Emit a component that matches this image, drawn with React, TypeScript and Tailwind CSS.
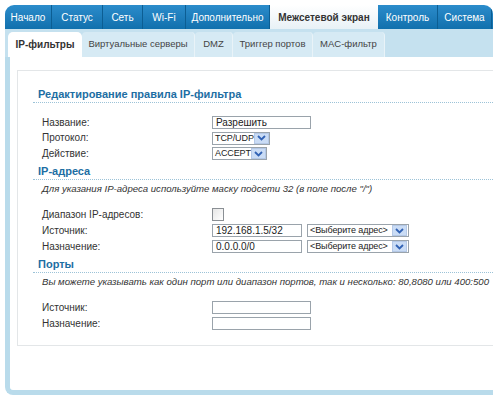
import React from "react";

const font = { fontFamily: '"Liberation Sans", Arial, sans-serif' };

function Chevron() {
  return (
    <span className="flex h-[11px] w-[15px] shrink-0 items-center justify-center border border-[#b4c8e6] bg-[#cadcf5]">
      <svg width="9" height="6" viewBox="0 0 9 6">
        <polyline points="1,1 4.5,4.5 8,1" fill="none" stroke="#3162b4" strokeWidth="1.8" />
      </svg>
    </span>
  );
}

function Select({ text, w }: { text: string; w: string }) {
  return (
    <div className={`flex h-[13px] shrink-0 items-center justify-between border border-[#9aa3ab] bg-white pl-[2px] pr-[1px] ${w}`}>
      <span className="whitespace-nowrap text-[9px] leading-[11px] tracking-[-0.1px] text-[#222]">{text}</span>
      <Chevron />
    </div>
  );
}

function Input({ text, w }: { text?: string; w: string }) {
  return (
    <div className={`flex h-[13px] items-center overflow-hidden border border-[#9aa3ab] bg-white pl-[3px] ${w}`}>
      <span className="whitespace-nowrap text-[10px] leading-[11px] text-[#222]">{text}</span>
    </div>
  );
}

function Row({ label, children }: { label: string; children: React.ReactNode }) {
  return (
    <div className="flex h-[13px] items-center">
      <div className="w-[194px] shrink-0 whitespace-nowrap pl-[24px] text-[10px] leading-[12px] text-[#333]">{label}</div>
      <div className="flex items-center gap-[5px]">{children}</div>
    </div>
  );
}

function Heading({ text }: { text: string }) {
  return (
    <div className="ml-[15px] border-b border-dotted border-[#9cc3d8] pl-[5px] text-[11px] font-bold leading-[15px] text-[#1d6ea3]">
      {text}
    </div>
  );
}

function Note({ text }: { text: string }) {
  return (
    <div className="mt-[3px] whitespace-nowrap pl-[24px] text-[9.6px] italic leading-[12px] text-[#333]">{text}</div>
  );
}

const tabs: { t: string; w: string; active?: boolean }[] = [
  { t: "Начало", w: "w-[47px]" },
  { t: "Статус", w: "w-[51px]" },
  { t: "Сеть", w: "w-[40px]" },
  { t: "Wi-Fi", w: "w-[43px]" },
  { t: "Дополнительно", w: "w-[84px]" },
  { t: "Межсетевой экран", w: "w-[108px]", active: true },
  { t: "Контроль", w: "w-[60px]" },
  { t: "Система", w: "w-[54px]" },
];

const subtabs: { t: string; w: string; active?: boolean }[] = [
  { t: "IP-фильтры", w: "w-[74px]", active: true },
  { t: "Виртуальные серверы", w: "w-[113px]" },
  { t: "DMZ", w: "w-[38px]" },
  { t: "Триггер портов", w: "w-[80px]" },
  { t: "MAC-фильтр", w: "w-[72px]" },
];

export default function App() {
  return (
    <div className="h-[399px] w-[503px] overflow-hidden bg-white pl-[5px] pt-[5px]" style={font}>
      <div className="w-[488px]">
        {/* top nav */}
        <div className="flex h-[24px] overflow-hidden rounded-t-[9px] bg-gradient-to-b from-[#2b8ccb] to-[#1070ad]">
          {tabs.map((tab) =>
            tab.active ? (
              <div
                key={tab.t}
                className={`flex items-center justify-center bg-gradient-to-b from-[#ffffff] to-[#e8f1f6] text-[10px] font-bold text-[#333] ${tab.w}`}
              >
                {tab.t}
              </div>
            ) : (
              <div
                key={tab.t}
                className={`flex items-center justify-center border-r border-[#0c5e93] text-[10px] text-white ${tab.w}`}
              >
                {tab.t}
              </div>
            )
          )}
        </div>
        {/* frame */}
        <div className="h-[366px] rounded-bl-[8px] border-b-[5px] border-l-[5px] border-[#b9dbeb]">
          <div className="-ml-[5px] flex h-[28px] items-end bg-[#c5e1ef] pl-[3px]">
            {subtabs.map((s) =>
              s.active ? (
                <div
                  key={s.t}
                  className={`flex h-[25px] items-center justify-center rounded-t-[5px] bg-white text-[10px] font-bold text-[#333] ${s.w}`}
                >
                  {s.t}
                </div>
              ) : (
                <div
                  key={s.t}
                  className={`flex h-[25px] items-center justify-center rounded-t-[4px] border-r border-[#e9f3f8] bg-[#d6eaf4] text-[9.5px] text-[#444] ${s.w}`}
                >
                  {s.t}
                </div>
              )
            )}
          </div>
          <div className="pl-[7px] pt-[13px]">
            <div className="h-[276px] border border-r-0 border-[#e3e6e8] bg-white">
              <div className="mt-[16px]">
                <Heading text="Редактирование правила IP-фильтра" />
              </div>
              <div className="mt-[13px] flex flex-col gap-[2.5px]">
                <Row label="Название:">
                  <Input text="Разрешить" w="w-[99px]" />
                </Row>
                <Row label="Протокол:">
                  <Select text="TCP/UDP" w="w-[58px]" />
                </Row>
                <Row label="Действие:">
                  <Select text="ACCEPT" w="w-[55px]" />
                </Row>
              </div>
              <div className="mt-[4px]">
                <Heading text="IP-адреса" />
              </div>
              <Note text={'Для указания IP-адреса используйте маску подсети 32 (в поле после "/")'} />
              <div className="mt-[13px] flex flex-col gap-[3px]">
                <Row label="Диапазон IP-адресов:">
                  <div className="h-[13px] w-[12px] border border-[#8a8f94] bg-gradient-to-br from-[#e6e6e6] to-white" />
                </Row>
                <Row label="Источник:">
                  <Input text="192.168.1.5/32" w="w-[90px]" />
                  <Select text="<Выберите адрес>" w="w-[102px]" />
                </Row>
                <Row label="Назначение:">
                  <Input text="0.0.0.0/0" w="w-[90px]" />
                  <Select text="<Выберите адрес>" w="w-[102px]" />
                </Row>
              </div>
              <div className="mt-[4px]">
                <Heading text="Порты" />
              </div>
              <Note text="Вы можете указывать как один порт или диапазон портов, так и несколько: 80,8080 или 400:500" />
              <div className="mt-[13px] flex flex-col gap-[3px]">
                <Row label="Источник:">
                  <Input w="w-[99px]" />
                </Row>
                <Row label="Назначение:">
                  <Input w="w-[99px]" />
                </Row>
              </div>
            </div>
          </div>
        </div>
      </div>
    </div>
  );
}
